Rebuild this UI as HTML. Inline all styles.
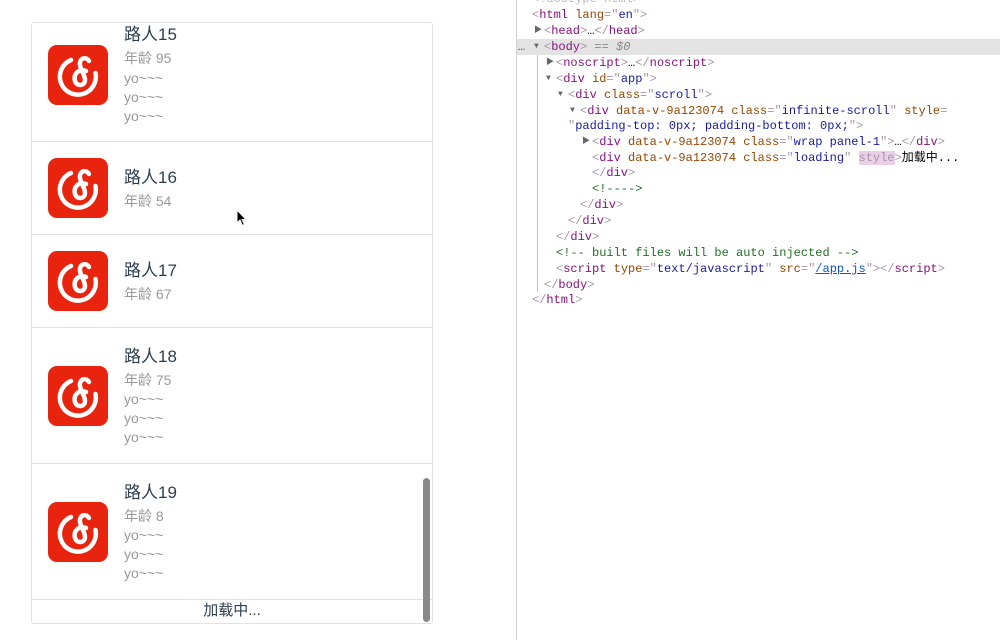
<!DOCTYPE html>
<html><head><meta charset="utf-8"><style>
*{margin:0;padding:0;box-sizing:border-box}
body{width:1000px;height:640px;background:#fff;position:relative;overflow:hidden;font-family:"Liberation Sans","Noto Sans CJK SC",sans-serif}
.panel{position:absolute;left:31px;top:22px;width:402px;height:602px;border:1px solid #e2e2e2;border-radius:3px;overflow:hidden}
.sep{position:absolute;left:0;width:402px;height:1px;background:#e2e2e2}
.ic{position:absolute;left:16px;width:60px;height:60px}
.t{position:absolute;left:92px;white-space:nowrap}
.n{font-size:17px;color:#2c3e50;line-height:24px}
.g{font-size:14px;color:#999;line-height:19px}
.load{position:absolute;left:0;width:400px;top:576px;text-align:center;font-size:15px;color:#2c3e50;line-height:24px}
.sb{position:absolute;left:391px;top:455px;width:7px;height:144px;background:#8a8a8a;border-radius:4px}
.dv{position:absolute;left:516px;top:0;width:1px;height:640px;background:#cfcfcf}
.hl{position:absolute;left:517px;top:39px;width:483px;height:16px;background:#e3e3e3}
.gd{position:absolute;left:537px;top:55px;width:1px;height:237px;background:#a9c7ef}
.code{position:absolute;left:0;top:0;font-family:"Liberation Mono","Noto Sans CJK SC",monospace;font-size:12px}
.l{position:absolute;white-space:pre;line-height:16px;height:16px}
.p{color:#a894a6}.tg{color:#881280}.a{color:#994500}.v{color:#1a1aa6}.c{color:#236e25}
.tri{position:absolute;left:-10px;top:0;color:#666;font-size:8px}
</style></head><body>
<div class="panel">
<svg width="0" height="0" style="position:absolute"><defs><g id="logo"><rect width="60" height="60" rx="9" fill="#e8240e"/><path d="M23 15 A18 18 0 1 0 47.5 28" fill="none" stroke="#fff" stroke-width="4.5" stroke-linecap="round"/><path d="M38 26 C31 23 25 29 27 36 C29 42 37 41 37 35 C37 30 33 26 32 20 C31 13 38 11 41 16" fill="none" stroke="#fff" stroke-width="4.5" stroke-linecap="round" stroke-linejoin="round"/></g></defs></svg>
<svg class="ic" style="top:22px"><use href="#logo"/></svg>
<div class="t n" style="top:0px">路人15</div>
<div class="t g" style="top:26px">年龄 95</div>
<div class="t g" style="top:46px">yo~~~</div>
<div class="t g" style="top:65px">yo~~~</div>
<div class="t g" style="top:84px">yo~~~</div>
<div class="sep" style="top:118px"></div>
<svg class="ic" style="top:135px"><use href="#logo"/></svg>
<div class="t n" style="top:143px">路人16</div>
<div class="t g" style="top:169px">年龄 54</div>
<div class="sep" style="top:211px"></div>
<svg class="ic" style="top:228px"><use href="#logo"/></svg>
<div class="t n" style="top:236px">路人17</div>
<div class="t g" style="top:262px">年龄 67</div>
<div class="sep" style="top:304px"></div>
<svg class="ic" style="top:343px"><use href="#logo"/></svg>
<div class="t n" style="top:322px">路人18</div>
<div class="t g" style="top:348px">年龄 75</div>
<div class="t g" style="top:367px">yo~~~</div>
<div class="t g" style="top:386px">yo~~~</div>
<div class="t g" style="top:405px">yo~~~</div>
<div class="sep" style="top:440px"></div>
<svg class="ic" style="top:479px"><use href="#logo"/></svg>
<div class="t n" style="top:458px">路人19</div>
<div class="t g" style="top:484px">年龄 8</div>
<div class="t g" style="top:503px">yo~~~</div>
<div class="t g" style="top:522px">yo~~~</div>
<div class="t g" style="top:541px">yo~~~</div>
<div class="sep" style="top:576px"></div>
<div class="load">加载中...</div>
<div class="sb"></div>
</div>
<svg style="position:absolute;left:236px;top:209px" width="12" height="18" viewBox="0 0 12 18"><path d="M1 1 L1 14 L4 11 L6.5 16.5 L8.5 15.5 L6 10.5 L10 10.5 Z" fill="#000" stroke="#fff" stroke-width="1"/></svg>
<div class="dv"></div>
<div class="hl"></div>
<div class="gd"></div>
<div class="code">
<div class="l p" style="left:532px;top:-9px;color:#bbb">&lt;!doctype html&gt;</div>
<div class="l" style="left:532px;top:7px"><span class="p">&lt;</span><span class="tg">html</span> <span class="a">lang</span><span class="p">="</span><span class="v">en</span><span class="p">"&gt;</span></div>
<div class="l" style="left:544px;top:23px"><span class="tri">▶</span><span class="p">&lt;</span><span class="tg">head</span><span class="p">&gt;</span>…<span class="p">&lt;/</span><span class="tg">head</span><span class="p">&gt;</span></div>
<div class="l" style="left:544px;top:39px"><span style="position:absolute;left:-26px;color:#555">…</span><span class="tri">▼</span><span class="p">&lt;</span><span class="tg">body</span><span class="p">&gt;</span> <span style="color:#888">== <i>$0</i></span></div>
<div class="l" style="left:556px;top:55px"><span class="tri">▶</span><span class="p">&lt;</span><span class="tg">noscript</span><span class="p">&gt;</span>…<span class="p">&lt;/</span><span class="tg">noscript</span><span class="p">&gt;</span></div>
<div class="l" style="left:556px;top:71px"><span class="tri">▼</span><span class="p">&lt;</span><span class="tg">div</span> <span class="a">id</span><span class="p">="</span><span class="v">app</span><span class="p">"&gt;</span></div>
<div class="l" style="left:568px;top:87px"><span class="tri">▼</span><span class="p">&lt;</span><span class="tg">div</span> <span class="a">class</span><span class="p">="</span><span class="v">scroll</span><span class="p">"&gt;</span></div>
<div class="l" style="left:580px;top:103px"><span class="tri">▼</span><span class="p">&lt;</span><span class="tg">div</span> <span class="a">data-v-9a123074</span> <span class="a">class</span><span class="p">="</span><span class="v">infinite-scroll</span><span class="p">"</span> <span class="a">style</span><span class="p">=</span></div>
<div class="l" style="left:568px;top:118px"><span class="p">"</span><span class="v">padding-top: 0px; padding-bottom: 0px;</span><span class="p">"&gt;</span></div>
<div class="l" style="left:592px;top:134px"><span class="tri">▶</span><span class="p">&lt;</span><span class="tg">div</span> <span class="a">data-v-9a123074</span> <span class="a">class</span><span class="p">="</span><span class="v">wrap panel-1</span><span class="p">"&gt;</span>…<span class="p">&lt;/</span><span class="tg">div</span><span class="p">&gt;</span></div>
<div class="l" style="left:592px;top:150px"><span class="p">&lt;</span><span class="tg">div</span> <span class="a">data-v-9a123074</span> <span class="a">class</span><span class="p">="</span><span class="v">loading</span><span class="p">"</span> <span class="p" style="background:#ecd0e8">style</span><span class="p">&gt;</span>加载中...</div>
<div class="l" style="left:592px;top:165px"><span class="p">&lt;/</span><span class="tg">div</span><span class="p">&gt;</span></div>
<div class="l c" style="left:592px;top:181px">&lt;!----&gt;</div>
<div class="l" style="left:580px;top:197px"><span class="p">&lt;/</span><span class="tg">div</span><span class="p">&gt;</span></div>
<div class="l" style="left:568px;top:213px"><span class="p">&lt;/</span><span class="tg">div</span><span class="p">&gt;</span></div>
<div class="l" style="left:556px;top:229px"><span class="p">&lt;/</span><span class="tg">div</span><span class="p">&gt;</span></div>
<div class="l c" style="left:556px;top:245px">&lt;!-- built files will be auto injected --&gt;</div>
<div class="l" style="left:556px;top:261px"><span class="p">&lt;</span><span class="tg">script</span> <span class="a">type</span><span class="p">="</span><span class="v">text/javascript</span><span class="p">"</span> <span class="a">src</span><span class="p">="</span><span style="color:#1155cc;text-decoration:underline">/app.js</span><span class="p">"&gt;&lt;/</span><span class="tg">script</span><span class="p">&gt;</span></div>
<div class="l" style="left:544px;top:277px"><span class="p">&lt;/</span><span class="tg">body</span><span class="p">&gt;</span></div>
<div class="l" style="left:532px;top:292px"><span class="p">&lt;/</span><span class="tg">html</span><span class="p">&gt;</span></div>
</div>
</body></html>
